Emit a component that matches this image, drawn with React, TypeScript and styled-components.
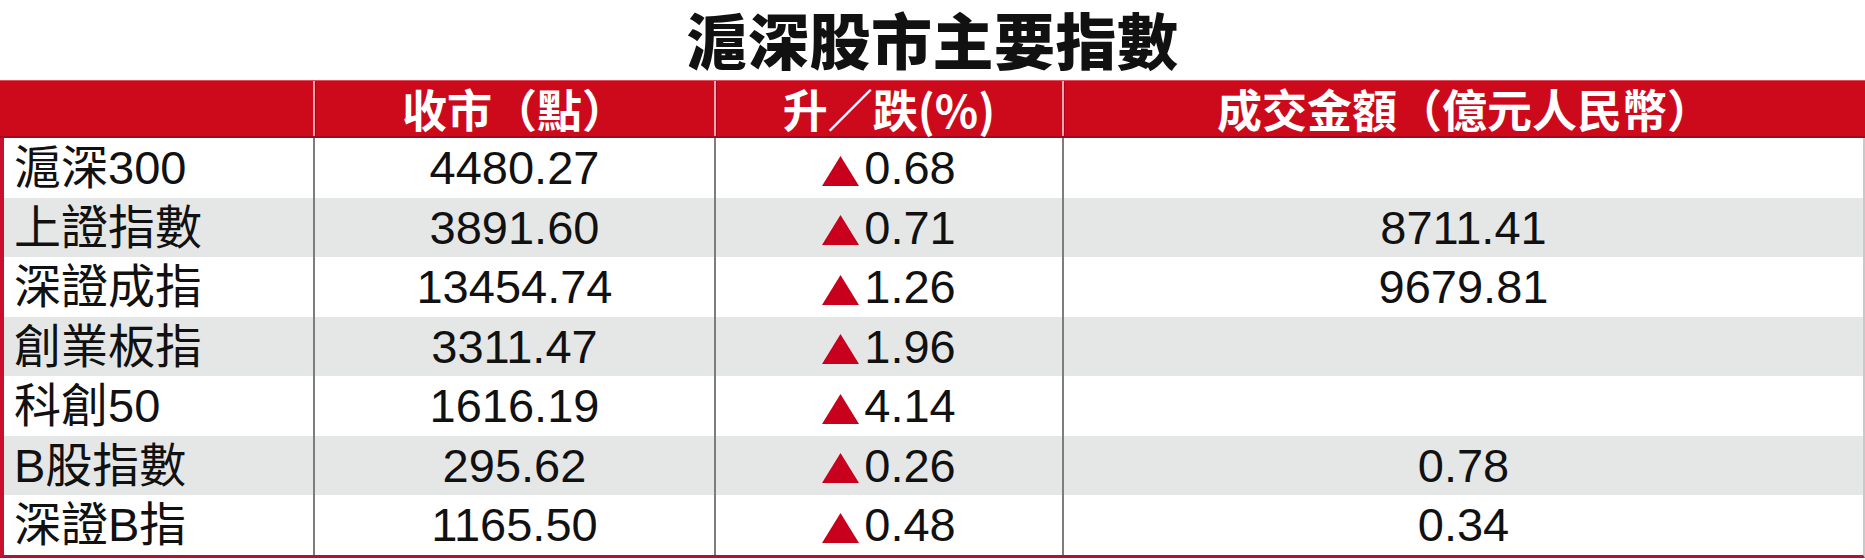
import React from "react";
import styled, { createGlobalStyle } from "styled-components";

const Global = createGlobalStyle`
  html, body { margin: 0; padding: 0; background: #ffffff; }
  body { width: 1865px; height: 560px; overflow: hidden; }
`;

const FONT = `"Liberation Sans", "Noto Sans CJK TC", "Noto Sans CJK SC", sans-serif`;
const CJK = `"Noto Sans CJK TC", "Noto Sans CJK SC", sans-serif`;

const Page = styled.div`
  width: 1865px;
  height: 560px;
  display: flex;
  flex-direction: column;
  background: #fff;
`;

const Title = styled.h1`
  margin: 0;
  height: 80px;
  text-align: center;
  font-family: ${CJK};
  font-weight: 900;
  font-size: 61px;
  line-height: 78px;
  color: #111;
  letter-spacing: 0.5px;
`;

const Grid = styled.div`
  display: grid;
  grid-template-columns: 313px 401px 348px 1fr;
`;

const HeaderRow = styled(Grid)`
  height: 58px;
  background: #cc0a1c;
  border-top: 1px solid #e25060;
  border-bottom: 2px solid #a8061a;
  box-sizing: border-box;
`;

const HeadCell = styled.div<{ $first?: boolean }>`
  display: flex;
  align-items: center;
  justify-content: center;
  font-family: ${CJK};
  font-weight: 700;
  font-size: 45px;
  line-height: 1;
  color: #fff;
  border-left: ${(p) => (p.$first ? "none" : "2px solid #f3a3ab")};
  box-shadow: ${(p) => (p.$first ? "none" : "inset 1px 0 0 #b0001a")};
`;

const Body = styled.div`
  border-left: 4px solid #c8102e;
  border-right: 2px solid #c9c9c9;
  border-bottom: 3px solid #b0142c;
`;

const Row = styled(Grid)<{ $shade: boolean }>`
  height: 59.5px;
  background: ${(p) => (p.$shade ? "#e5e7e7" : "#ffffff")};
  grid-template-columns: 309px 401px 348px 1fr;
`;

const Cell = styled.div<{ $align?: "left" | "center"; $first?: boolean }>`
  display: flex;
  align-items: center;
  justify-content: ${(p) => (p.$align === "left" ? "flex-start" : "center")};
  padding-left: ${(p) => (p.$align === "left" ? "10px" : "0")};
  font-family: ${FONT};
  font-size: 47px;
  line-height: 1;
  color: #111;
  border-left: ${(p) => (p.$first ? "none" : "2px solid #7d7d7d")};
`;

const Change = styled.span`
  display: inline-flex;
  align-items: center;
  gap: 5px;
`;

const Tri = () => (
  <svg width="37" height="30" viewBox="0 0 37 30" aria-hidden="true" style={{ marginTop: 6 }}>
    <polygon points="18.5,0 37,30 0,30" fill="#c8001e" />
  </svg>
);

type R = { name: string; close: string; chg: string; vol: string };

const rows: R[] = [
  { name: "滬深300", close: "4480.27", chg: "0.68", vol: "" },
  { name: "上證指數", close: "3891.60", chg: "0.71", vol: "8711.41" },
  { name: "深證成指", close: "13454.74", chg: "1.26", vol: "9679.81" },
  { name: "創業板指", close: "3311.47", chg: "1.96", vol: "" },
  { name: "科創50", close: "1616.19", chg: "4.14", vol: "" },
  { name: "B股指數", close: "295.62", chg: "0.26", vol: "0.78" },
  { name: "深證B指", close: "1165.50", chg: "0.48", vol: "0.34" },
];

export default function App() {
  return (
    <Page>
      <Global />
      <Title>滬深股市主要指數</Title>
      <HeaderRow>
        <HeadCell $first />
        <HeadCell>收市（點）</HeadCell>
        <HeadCell>升／跌(%)</HeadCell>
        <HeadCell>成交金額（億元人民幣）</HeadCell>
      </HeaderRow>
      <Body>
        {rows.map((r, i) => (
          <Row key={r.name} $shade={i % 2 === 1}>
            <Cell $align="left" $first>
              {r.name}
            </Cell>
            <Cell>{r.close}</Cell>
            <Cell>
              <Change>
                <Tri />
                {r.chg}
              </Change>
            </Cell>
            <Cell>{r.vol}</Cell>
          </Row>
        ))}
      </Body>
    </Page>
  );
}
